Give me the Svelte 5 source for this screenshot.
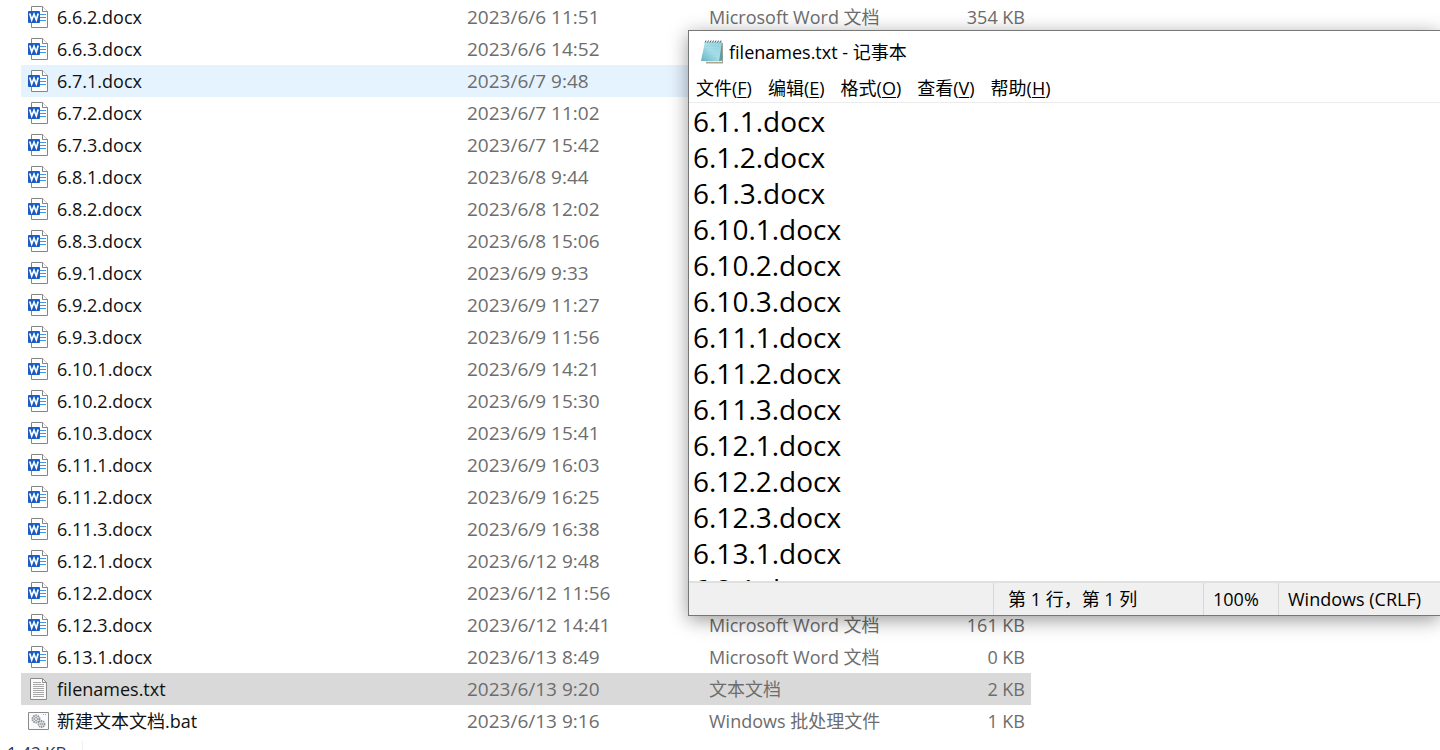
<script>
    const word = 'Microsoft Word 文档';

    let files = [
        { name: '6.6.2.docx', date: '2023/6/6 11:51', type: word, size: '354 KB' },
        { name: '6.6.3.docx', date: '2023/6/6 14:52', type: word, size: '' },
        { name: '6.7.1.docx', date: '2023/6/7 9:48', type: word, size: '' },
        { name: '6.7.2.docx', date: '2023/6/7 11:02', type: word, size: '' },
        { name: '6.7.3.docx', date: '2023/6/7 15:42', type: word, size: '' },
        { name: '6.8.1.docx', date: '2023/6/8 9:44', type: word, size: '' },
        { name: '6.8.2.docx', date: '2023/6/8 12:02', type: word, size: '' },
        { name: '6.8.3.docx', date: '2023/6/8 15:06', type: word, size: '' },
        { name: '6.9.1.docx', date: '2023/6/9 9:33', type: word, size: '' },
        { name: '6.9.2.docx', date: '2023/6/9 11:27', type: word, size: '' },
        { name: '6.9.3.docx', date: '2023/6/9 11:56', type: word, size: '' },
        { name: '6.10.1.docx', date: '2023/6/9 14:21', type: word, size: '' },
        { name: '6.10.2.docx', date: '2023/6/9 15:30', type: word, size: '' },
        { name: '6.10.3.docx', date: '2023/6/9 15:41', type: word, size: '' },
        { name: '6.11.1.docx', date: '2023/6/9 16:03', type: word, size: '' },
        { name: '6.11.2.docx', date: '2023/6/9 16:25', type: word, size: '' },
        { name: '6.11.3.docx', date: '2023/6/9 16:38', type: word, size: '' },
        { name: '6.12.1.docx', date: '2023/6/12 9:48', type: word, size: '' },
        { name: '6.12.2.docx', date: '2023/6/12 11:56', type: word, size: '' },
        { name: '6.12.3.docx', date: '2023/6/12 14:41', type: word, size: '161 KB' },
        { name: '6.13.1.docx', date: '2023/6/13 8:49', type: word, size: '0 KB' },
        { name: 'filenames.txt', date: '2023/6/13 9:20', type: '文本文档', size: '2 KB' },
        { name: '新建文本文档.bat', date: '2023/6/13 9:16', type: 'Windows 批处理文件', size: '1 KB' }
    ];

    let hovered = '6.7.1.docx';
    let selected = 'filenames.txt';

    const menus = [
        ['文件', 'F'],
        ['编辑', 'E'],
        ['格式', 'O'],
        ['查看', 'V'],
        ['帮助', 'H']
    ];

    let text = [
        '6.1.1.docx', '6.1.2.docx', '6.1.3.docx',
        '6.10.1.docx', '6.10.2.docx', '6.10.3.docx',
        '6.11.1.docx', '6.11.2.docx', '6.11.3.docx',
        '6.12.1.docx', '6.12.2.docx', '6.12.3.docx',
        '6.13.1.docx', '6.2.1.docx'
    ].join('\n');
</script>

<main>
    <table>
        <colgroup>
            <col class="col-name" />
            <col class="col-date" />
            <col class="col-type" />
            <col class="col-size" />
        </colgroup>
        <tbody>
            {#each files as file}
                <tr class:hovered={file.name === hovered} class:selected={file.name === selected}>
                    <td class="name">
                        <div class="file">
                            {#if file.name.endsWith('.docx')}
                                <svg width="22" height="24" viewBox="0 0 22 24">
                                    <path d="M4.500 1.500h11l5 5v16h-16z" fill="#fff" stroke="#868686" />
                                    <path d="M15.500 1.500v5h5" fill="#fff" stroke="#868686" />
                                    <path d="M13 9.500h6M13 12.500h6M13 15.500h6" stroke="#3f96e8" />
                                    <rect x="1" y="6" width="12" height="12" rx="1" fill="#1a5cc4" />
                                    <path d="M2.800 8.500l1.900 6.500L7 9.200 9.300 15l1.900-6.500" fill="none" stroke="#fff" stroke-width="1.700" />
                                </svg>
                            {:else if file.name.endsWith('.txt')}
                                <svg width="22" height="24" viewBox="0 0 22 24">
                                    <path d="M3.500 1.500h12l4 4v17h-16z" fill="#fafafa" stroke="#8a8a8a" />
                                    <path d="M15.500 1.500v4h4" fill="none" stroke="#8a8a8a" />
                                    <path d="M6 5.500h8M6 7.500h11M6 9.500h11M6 11.500h11M6 13.500h11M6 15.500h11M6 17.500h11M6 19.500h11" stroke="#a8a8a8" />
                                </svg>
                            {:else}
                                <svg width="22" height="24" viewBox="0 0 22 24">
                                    <path d="M1.500 3.500h20v17h-20z" fill="#fafafa" stroke="#8a8a8a" />
                                    <path d="M16 5.500h4" stroke="#aaa" stroke-dasharray="1 1" />
                                    <g fill="none" stroke="#8d9399">
                                        <circle cx="9" cy="10" r="3.500" stroke-width="2" stroke-dasharray="1.500 .7" />
                                        <circle cx="9" cy="10" r="1.500" />
                                        <circle cx="14.500" cy="15" r="3" stroke-width="1.800" stroke-dasharray="1.300 .6" />
                                        <circle cx="14.500" cy="15" r="1" />
                                    </g>
                                </svg>
                            {/if}
                            <span>{file.name}</span>
                        </div>
                    </td>
                    <td class="date">{file.date}</td>
                    <td>{file.type}</td>
                    <td class="size">{file.size}</td>
                </tr>
            {/each}
        </tbody>
    </table>
    <footer><span>1.42 KB</span></footer>

    <section class="notepad">
        <header>
            <svg width="26" height="26" viewBox="0 0 26 26">
                <defs>
                    <linearGradient id="cover" x1="0" y1="1" x2="1" y2="0">
                        <stop offset="0" stop-color="#5fb0c3" />
                        <stop offset=".5" stop-color="#a9dfe9" />
                        <stop offset="1" stop-color="#8fcddb" />
                    </linearGradient>
                </defs>
                <path d="M8 4h16v20.500H7V23z" fill="#b0a58d" />
                <path d="M7 3h16v20H6z" fill="#eee9da" />
                <path d="M6 2.500h17L20 22H2z" fill="url(#cover)" />
                <path d="M20 22l3-19.500.5 19z" fill="#5b9bab" />
                <path d="M6 7h14M5.500 10h14M5 13h14M4.500 16h14M4 19h14" stroke="#8accd8" stroke-width=".5" />
                <path d="M6 3.500l1-2M8.500 3.500l1-2M11 3.500l1-2M13.500 3.500l1-2M16 3.500l1-2M18.500 3.500l1-2M21 3.500l1-2" stroke="#666" />
            </svg>
            <h1>filenames.txt - 记事本</h1>
        </header>
        <nav>
            {#each menus as [label, key]}
                <button type="button">{label}(<u>{key}</u>)</button>
            {/each}
        </nav>
        <textarea aria-label="filenames.txt" spellcheck="false" bind:value={text}></textarea>
        <div class="status">
            <span class="blank"></span>
            <span class="position">第 1 行，第 1 列</span>
            <span class="zoom">100%</span>
            <span class="ending">Windows (CRLF)</span>
        </div>
    </section>
</main>

<style>
    :global(body) {
        background: #fff;
    }

    main {
        position: relative;
        height: 100vh;
        padding: 1px 0 0 21px;
        box-sizing: border-box;
        overflow: hidden;
        font-family: "Open Sans", "Noto Sans CJK SC", sans-serif;
        font-size: 18px;
        line-height: 32px;
        color: #111;
    }

    table {
        width: 1010px;
        table-layout: fixed;
        border-collapse: collapse;
    }

    .col-name {
        width: 446px;
    }

    .col-date {
        width: 242px;
    }

    .col-type {
        width: 206px;
    }

    td {
        height: 32px;
        padding: 0;
        line-height: 32px;
        color: #6d6d6d;
        white-space: nowrap;
    }

    .name {
        color: #111;
    }

    .file {
        display: flex;
        align-items: center;
        gap: 8px;
        height: 32px;
        padding-left: 6px;
    }

    .date {
        font-size: 19px;
    }

    .size {
        padding-right: 6px;
        text-align: right;
    }

    .hovered {
        background: #e5f3ff;
    }

    .selected {
        background: #d9d9d9;
    }

    footer {
        margin-left: -14px;
        font-size: 17px;
        color: #1e395b;
    }

    footer span {
        padding-right: 16px;
        border-right: 1px solid #f0f0f0;
    }

    /* window on top of the file list */
    .notepad {
        position: absolute;
        top: 30px;
        left: 688px;
        right: 0;
        height: 586px;
        display: flex;
        flex-direction: column;
        box-sizing: border-box;
        border: 1px solid #777;
        border-right: none;
        background: #fff;
        box-shadow: 0 4px 18px rgba(0, 0, 0, 0.4);
        color: #000;
    }

    header {
        display: flex;
        align-items: center;
        gap: 4px;
        height: 42px;
        padding-left: 10px;
    }

    h1 {
        margin: 0;
        font-size: 18px;
        font-weight: 400;
    }

    nav {
        display: flex;
        gap: 16px;
        height: 29px;
        padding-left: 7px;
        border-bottom: 1px solid #ececec;
    }

    button {
        padding: 0;
        border: none;
        background: none;
        font: inherit;
        line-height: 30px;
        color: inherit;
    }

    u {
        text-underline-offset: 2px;
    }

    textarea {
        flex: 1;
        min-height: 0;
        padding: 0 4px;
        border: none;
        outline: none;
        resize: none;
        overflow: hidden;
        font-family: inherit;
        font-size: 28px;
        line-height: 36px;
        color: #000;
    }

    .status {
        display: flex;
        height: 32px;
        border-top: 2px solid #e0e0e0;
        background: #f0f0f0;
    }

    .status span {
        box-sizing: border-box;
        border-left: 1px solid #d7d7d7;
        line-height: 32px;
        white-space: nowrap;
    }

    .status .blank {
        flex: 1;
        border-left: none;
    }

    .position {
        width: 210px;
        padding-left: 14px;
    }

    .zoom {
        width: 75px;
        padding-left: 9px;
    }

    .ending {
        width: 162px;
        padding-left: 9px;
    }
</style>
